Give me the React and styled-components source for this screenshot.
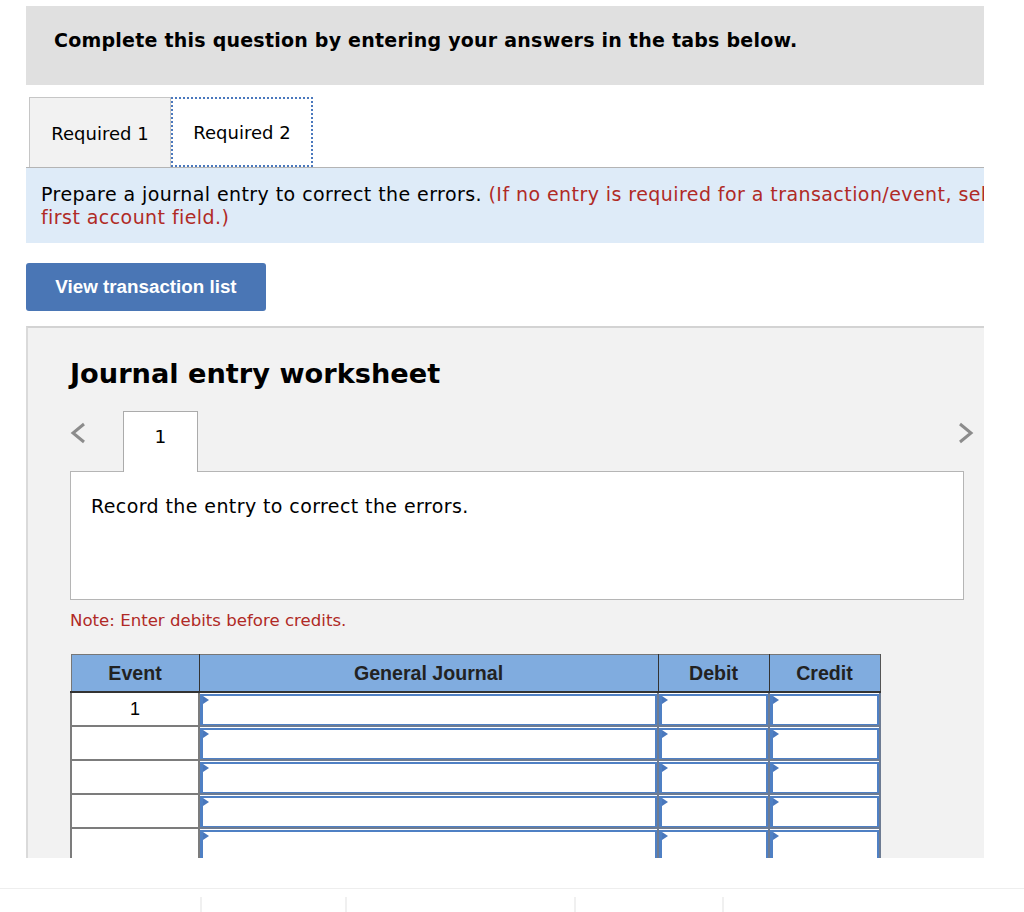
import React from 'react';
import styled, { createGlobalStyle } from 'styled-components';

const GlobalStyle = createGlobalStyle`
  html, body {
    margin: 0;
    padding: 0;
    background: #fff;
  }
  body {
    font-family: "DejaVu Sans", Verdana, sans-serif;
    color: #000;
  }
`;

const Page = styled.div`
  width: 1024px;
  height: 912px;
  overflow: hidden;
`;

const Content = styled.div`
  margin-left: 26px;
  width: 958px;
  padding-top: 6px;
`;

const Header = styled.div`
  height: 79px;
  box-sizing: border-box;
  background: #e0e0e0;
  padding: 23px 28px 0;
  font-size: 19px;
  letter-spacing: 0.23px;
  line-height: 22px;
  font-weight: bold;
`;

const Tabs = styled.div`
  display: flex;
  margin-top: 12px;
  padding-left: 3px;
  border-bottom: 1px solid #b4b4b4;
`;

const Tab = styled.div`
  width: ${p => p.w}px;
  height: 70px;
  box-sizing: border-box;
  display: flex;
  align-items: center;
  justify-content: center;
  font-size: 18px;
  background: ${p => (p.active ? '#fff' : '#f2f2f2')};
  border: ${p => (p.active ? '2px dotted #4a78bd' : '1px solid #c6c6c6')};
  border-bottom: ${p => (p.active ? '2px dotted #4a78bd' : 'none')};
  margin-bottom: ${p => (p.active ? '-1px' : '0')};
  padding-top: 1px;
`;

const Instructions = styled.div`
  height: 75px;
  box-sizing: border-box;
  background: #deebf8;
  padding: 15px 0 0 15px;
  font-size: 19px;
  letter-spacing: 0.43px;
  line-height: 23px;
  overflow: hidden;
`;

const Line = styled.div`
  white-space: nowrap;
`;

const Red = styled.span`
  color: #b02a26;
`;

const Button = styled.button`
  display: block;
  margin-top: 20px;
  width: 240px;
  height: 48px;
  border: none;
  border-radius: 3px;
  background: #4a76b5;
  color: #fff;
  font-family: "Liberation Sans", Arial, sans-serif;
  font-weight: bold;
  font-size: 18.8px;
  padding: 0;
`;

const Panel = styled.div`
  margin-top: 15px;
  height: 532px;
  box-sizing: border-box;
  background: #f2f2f2;
  border-top: 2px solid #d3d3d3;
  border-left: 2px solid #dadada;
  padding: 0 20px 0 42px;
  overflow: hidden;
`;

const Title = styled.h2`
  margin: 30px 0 0;
  font-size: 27.2px;
  line-height: 32px;
  font-weight: bold;
`;

const Nav = styled.div`
  display: flex;
  margin-top: 21px;
`;

const Arrow = styled.div`
  width: ${p => p.w}px;
  display: flex;
  justify-content: ${p => p.align};
  padding-top: 11px;
  margin-right: ${p => p.mr || 0}px;
`;

const EntryTab = styled.div`
  width: 75px;
  height: 61px;
  box-sizing: border-box;
  background: #fff;
  border: 1px solid #ababab;
  border-bottom: none;
  margin-bottom: -1px;
  position: relative;
  z-index: 1;
  text-align: center;
  padding-top: 14px;
  font-size: 18.5px;
  line-height: 22px;
`;

const Spacer = styled.div`
  flex: 1;
`;

const RecordBox = styled.div`
  height: 129px;
  box-sizing: border-box;
  background: #fff;
  border: 1px solid #b5b5b5;
  padding: 23px 20px 0;
  font-size: 19px;
  letter-spacing: 0.4px;
  line-height: 23px;
`;

const Note = styled.div`
  margin-top: 11px;
  font-size: 16.6px;
  line-height: 20px;
  color: #b02a26;
`;

const Table = styled.table`
  margin-top: 23px;
  width: 809px;
  border-collapse: collapse;
  table-layout: fixed;
  font-family: "Liberation Sans", Arial, sans-serif;
`;

const Th = styled.th`
  height: 36px;
  padding: 0;
  background: #80acdf;
  color: #222;
  font-size: 19.6px;
  font-weight: bold;
  border: 1px solid #333;
  border-top-color: #777;
  border-bottom: 2px solid #333;
  &:first-child { border-left-color: #777; }
  &:last-child { border-right-color: #555; }
`;

const Td = styled.td`
  height: 34px;
  box-sizing: border-box;
  padding: 0;
  background: #fff;
  border: 2px solid #7c7c7c;
  text-align: center;
  font-size: 18px;
  vertical-align: middle;
`;

const InputTd = styled.td`
  height: 34px;
  box-sizing: border-box;
  padding: 0;
  background: #fff;
  border: 2px solid #6e7c92;
`;

const Field = styled.div`
  position: relative;
  height: 31px;
  box-sizing: border-box;
  border: 2px solid #4f80c4;
  border-bottom-width: 1px;
  border-left-width: 3px;
  background: #fff;
  &::before {
    content: '';
    position: absolute;
    left: 0;
    top: 0;
    border-top: 4px solid transparent;
    border-bottom: 4px solid transparent;
    border-left: 6px solid #4a78bd;
  }
`;

const Footer = styled.div`
  margin-top: 30px;
  border-top: 1px solid #eeeeee;
  padding-top: 8px;
  display: flex;
`;

const FooterCell = styled.div`
  width: ${p => p.w}px;
  height: 16px;
  border-right: 2px solid #f0f0f0;
`;

const Chevron = ({ dir }) => (
  <svg width="16" height="22" viewBox="0 0 16 22">
    <polyline
      points={dir === 'left' ? '14,2 3,11 14,20' : '2,2 13,11 2,20'}
      fill="none"
      stroke="#8c8c8c"
      strokeWidth="3"
    />
  </svg>
);

const rows = [1, 2, 3, 4, 5];

export default function App() {
  return (
    <Page>
      <GlobalStyle />
      <Content>
        <Header>Complete this question by entering your answers in the tabs below.</Header>
        <Tabs>
          <Tab w={142}>Required 1</Tab>
          <Tab w={142} active>Required 2</Tab>
        </Tabs>
        <Instructions>
          <Line>
            Prepare a journal entry to correct the errors.{' '}
            <Red>(If no entry is required for a transaction/event, select "No Journal Entry Required" in the</Red>
          </Line>
          <Line>
            <Red>first account field.)</Red>
          </Line>
        </Instructions>
        <Button>View transaction list</Button>
        <Panel>
          <Title>Journal entry worksheet</Title>
          <Nav>
            <Arrow w={53} align="flex-start">
              <Chevron dir="left" />
            </Arrow>
            <EntryTab>1</EntryTab>
            <Spacer />
            <Arrow w={40} align="flex-end" mr={-10}>
              <Chevron dir="right" />
            </Arrow>
          </Nav>
          <RecordBox>Record the entry to correct the errors.</RecordBox>
          <Note>Note: Enter debits before credits.</Note>
          <Table>
            <colgroup>
              <col style={{ width: 128 }} />
              <col style={{ width: 459 }} />
              <col style={{ width: 111 }} />
              <col style={{ width: 111 }} />
            </colgroup>
            <thead>
              <tr>
                <Th>Event</Th>
                <Th>General Journal</Th>
                <Th>Debit</Th>
                <Th>Credit</Th>
              </tr>
            </thead>
            <tbody>
              {rows.map(r => (
                <tr key={r}>
                  <Td>{r === 1 ? '1' : ''}</Td>
                  <InputTd><Field /></InputTd>
                  <InputTd><Field /></InputTd>
                  <InputTd><Field /></InputTd>
                </tr>
              ))}
            </tbody>
          </Table>
        </Panel>
      </Content>
      <Footer>
        <FooterCell w={200} />
        <FooterCell w={143} />
        <FooterCell w={227} />
        <FooterCell w={146} />
      </Footer>
    </Page>
  );
}
